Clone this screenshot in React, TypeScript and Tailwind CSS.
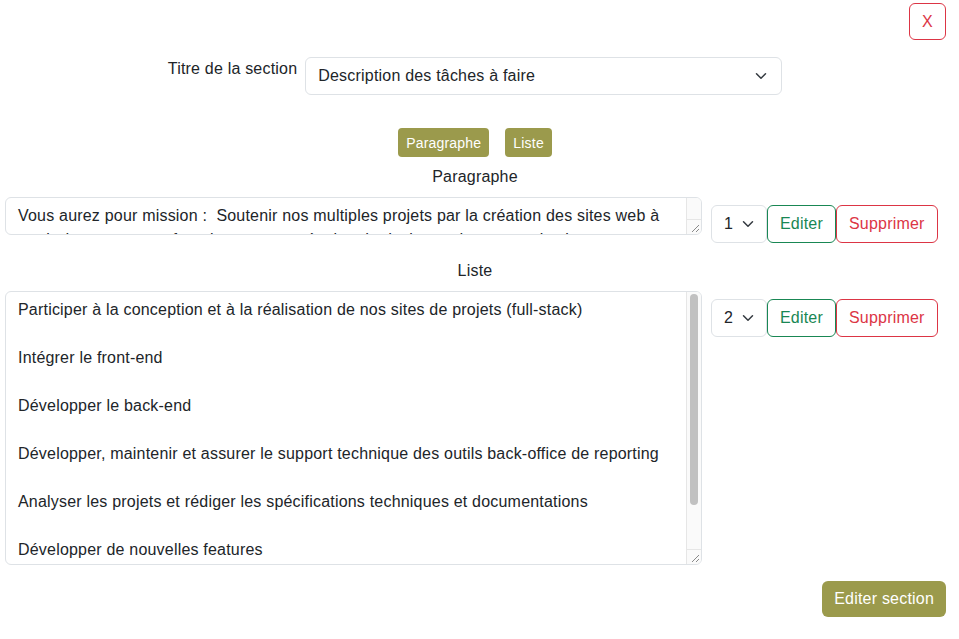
const listItems = [
  "Participer à la conception et à la réalisation de nos sites de projets (full-stack)",
  "Intégrer le front-end",
  "Développer le back-end",
  "Développer, maintenir et assurer le support technique des outils back-office de reporting",
  "Analyser les projets et rédiger les spécifications techniques et documentations",
  "Développer de nouvelles features",
  "Assurer la maintenance corrective et évolutive des applications",
];

const paragraphText =
  "Vous aurez pour mission :  Soutenir nos multiples projets par la création des sites web à partir des maquettes fournies par notre équipe de design et de communication.";

const Chevron = () => (
  <svg width="16" height="12" viewBox="0 0 16 16" fill="none" stroke="#343a40" strokeWidth="2" strokeLinecap="round" strokeLinejoin="round">
    <path d="m2 5 6 6 6-6" />
  </svg>
);

// fake scrollbar + resize grip drawn over the right edge of a textarea
const ScrollRail = ({ thumb }: { thumb?: number }) => (
  <div className="pointer-events-none absolute bottom-[1px] right-[1px] top-[1px] flex w-[15px] flex-col rounded-r-[5px] border-l border-[#e6e6e6] bg-[#fafafa]">
    <div className="flex-1 pl-[3px] pr-[3px] pt-[2px]">
      {thumb ? <div className="w-[8px] rounded-full bg-[#c1c1c1]" style={{ height: thumb }} /> : null}
    </div>
    <div className="flex h-[15px] items-end justify-end border-t border-[#e6e6e6] pb-[2px] pr-[2px]">
      <svg width="8" height="8" viewBox="0 0 8 8" stroke="#8a8a8a" strokeWidth="1">
        <path d="M1 8 8 1M5 8l3-3" />
      </svg>
    </div>
  </div>
);

const RowControls = ({ order }: { order: number }) => (
  <div className="ml-[9px] mt-[8px] flex h-[38px] items-stretch">
    <div className="flex w-[56px] items-center justify-between rounded-[6px] border border-[#dee2e6] pl-[12px] pr-[10px] text-base text-[#212529]">
      <span>{order}</span>
      <Chevron />
    </div>
    <button className="rounded-[6px] border border-[#198754] px-[12px] text-base text-[#198754]">Editer</button>
    <button className="rounded-[6px] border border-[#dc3545] px-[12px] text-base text-[#dc3545]">Supprimer</button>
  </div>
);

const App = () => {
  return (
    <div className="h-[639px] w-[959px] overflow-hidden bg-white font-['Liberation_Sans',Arial,sans-serif] tracking-[0.2px] text-[#212529]">
      <div className="flex justify-end pr-[13px] pt-[3px]">
        <button className="flex h-[37px] w-[37px] items-center justify-center rounded-[6px] border border-[#dc3545] text-base text-[#dc3545]">
          X
        </button>
      </div>

      <div className="w-[950px]">
        <div className="mt-[17px] flex items-start justify-center gap-2">
          <label className="text-base leading-6">Titre de la section</label>
          <div className="flex h-[38px] w-[477px] items-center justify-between rounded-[6px] border border-[#dee2e6] pl-[12px] pr-[12px] text-base">
            <span>Description des tâches à faire</span>
            <Chevron />
          </div>
        </div>

        <div className="mt-[33px] flex justify-center gap-4">
          <button className="h-[29px] rounded-[4px] bg-[#9b9a4c] px-2 text-sm font-medium text-white">Paragraphe</button>
          <button className="h-[29px] rounded-[4px] bg-[#9b9a4c] px-2 text-sm font-medium text-white">Liste</button>
        </div>

        <p className="mt-[8px] text-center text-base leading-6">Paragraphe</p>
      </div>

      <div className="mt-[8px] flex pl-[5px]">
        <div className="relative h-[38px] w-[697px]">
          <textarea
            readOnly
            defaultValue={paragraphText}
            className="h-full w-full resize-none rounded-[6px] border border-[#dee2e6] py-[6px] pl-[12px] pr-[16px] text-base leading-6 text-[#212529] outline-none"
          />
          <ScrollRail />
        </div>
        <RowControls order={1} />
      </div>

      <p className="mt-4 w-[950px] text-center text-base leading-6">Liste</p>

      <div className="mt-[8px] flex pl-[5px]">
        <div className="relative h-[274px] w-[697px]">
          <textarea
            readOnly
            defaultValue={listItems.join("\n\n")}
            className="h-full w-full resize-none rounded-[6px] border border-[#dee2e6] py-[6px] pl-[12px] pr-[16px] text-base leading-6 text-[#212529] outline-none"
          />
          <ScrollRail thumb={211} />
        </div>
        <RowControls order={2} />
      </div>

      <div className="mt-[16px] flex justify-end pr-[13px]">
        <button className="h-[36px] rounded-[6px] bg-[#9b9a4c] px-3 text-base text-white">Editer section</button>
      </div>
    </div>
  );
};

export default App;
